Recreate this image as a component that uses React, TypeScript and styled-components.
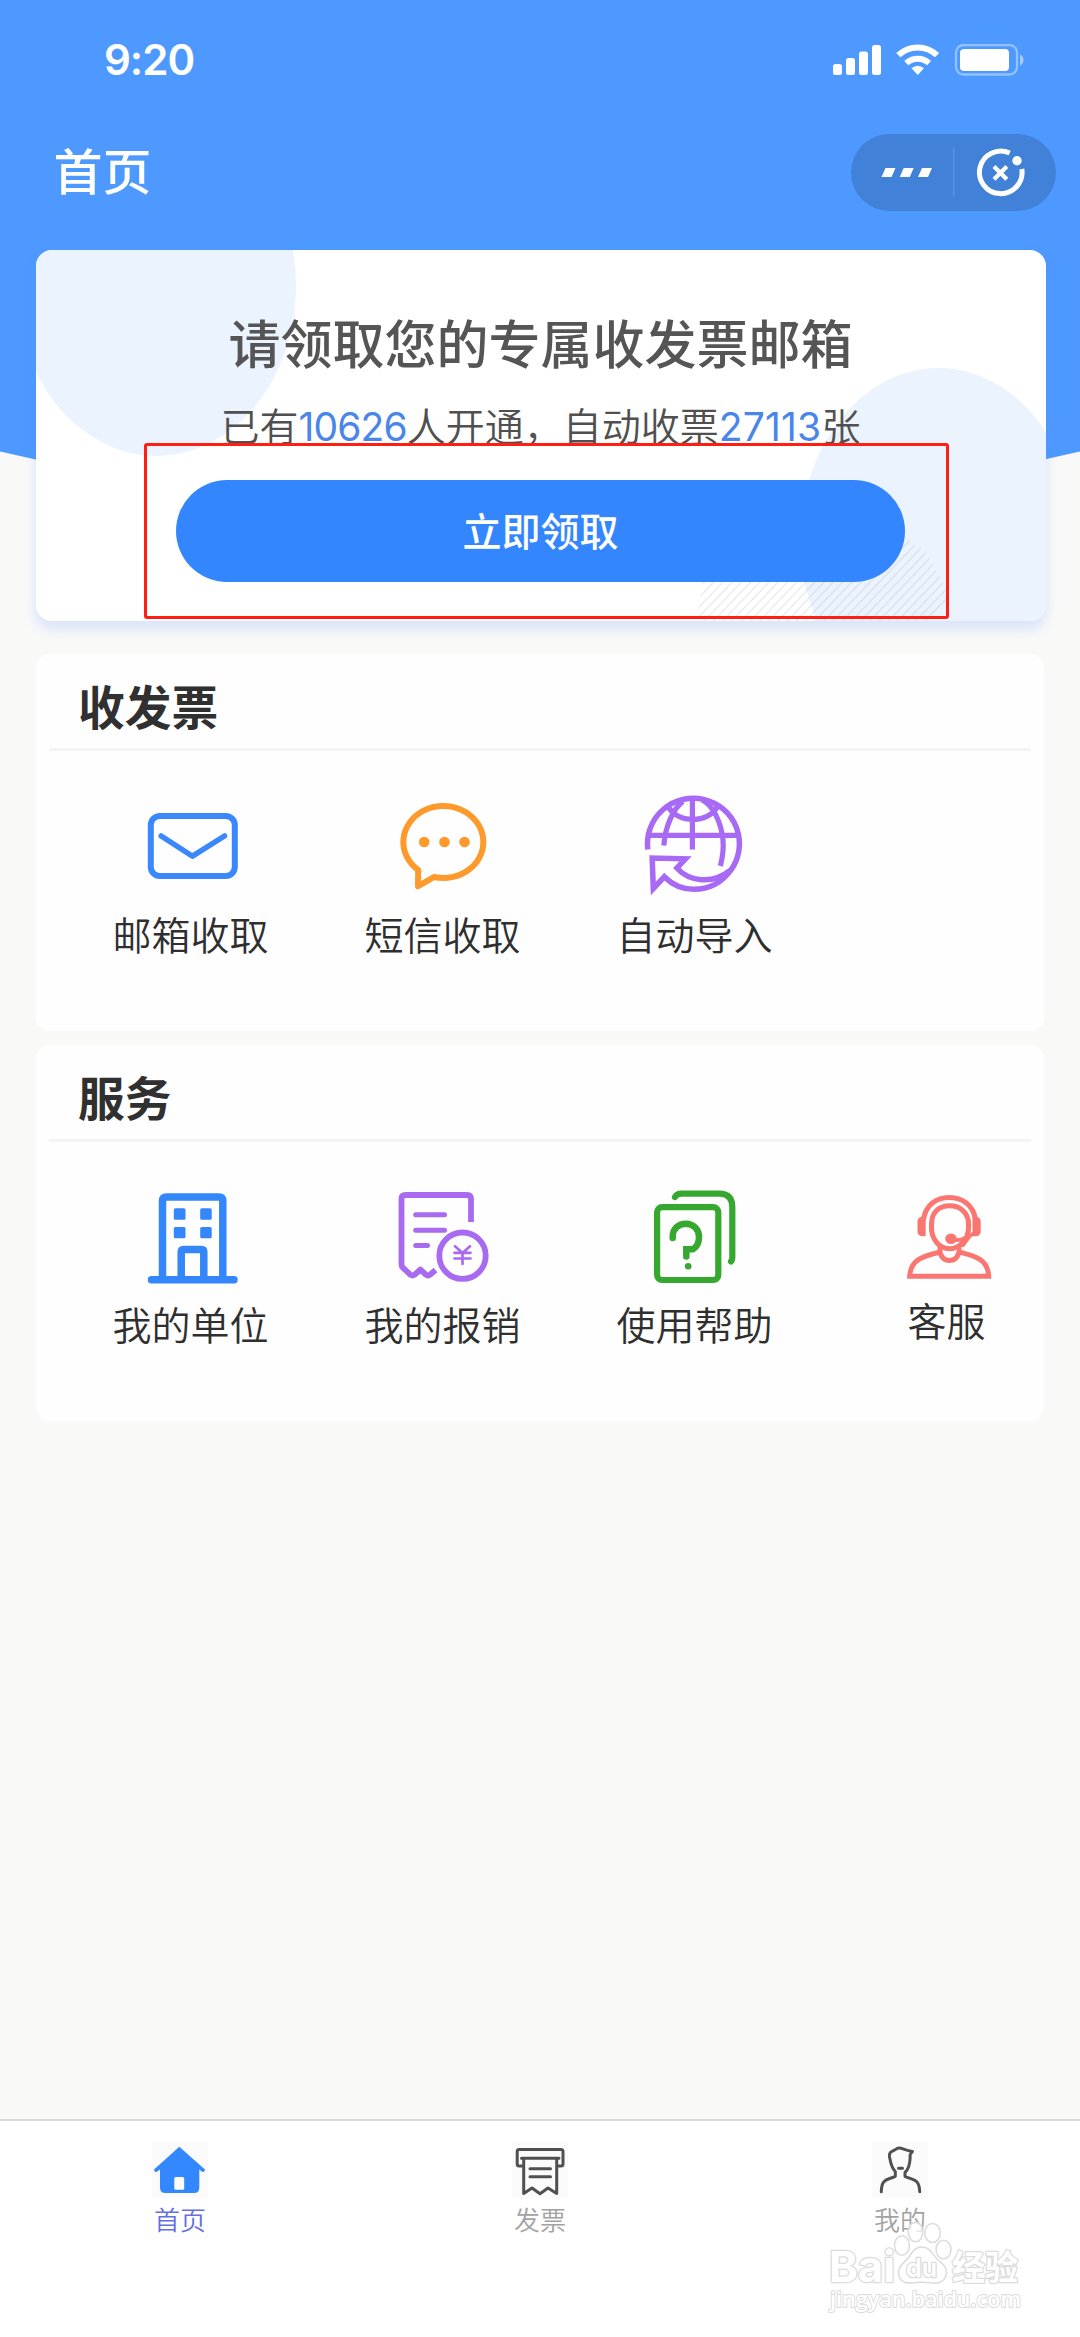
import React from 'react';
import styled, { createGlobalStyle } from 'styled-components';

const GlobalStyle = createGlobalStyle`
  *, *::before, *::after { box-sizing: border-box; }
  body {
    margin: 0;
    background: #f9f9f8;
    font-family: Inter, "Noto Sans CJK SC", sans-serif;
    color: #2f2f2f;
  }
`;

const Page = styled.div`
  position: relative;
  width: 1080px;
  height: 2337px;
  display: flex;
  flex-direction: column;
  overflow: hidden;
`;

const Hero = styled.header`
  flex: none;
  height: 520px;
  background: #4e99ff;
  clip-path: circle(2400px at 540px -1887px);
  color: #fff;
`;

const StatusBar = styled.div`
  height: 119px;
  padding: 0 56px 0 104px;
  display: flex;
  align-items: center;
  justify-content: space-between;
`;

const Clock = styled.span`
  font-size: 42px;
  font-weight: 600;
  line-height: 1;
  letter-spacing: -1px;
`;

const NavBar = styled.div`
  height: 107px;
  padding: 0 24px 0 53.5px;
  display: flex;
  align-items: center;
  justify-content: space-between;
`;

const NavTitle = styled.h1`
  margin: 0;
  font-size: 49px;
  line-height: 60px;
  font-weight: 500;
`;

const Capsule = styled.div`
  width: 205px;
  height: 77px;
  border-radius: 39px;
  background: #4281d8;
`;

const ClaimCard = styled.section`
  position: relative;
  flex: none;
  width: 1010px;
  height: 371px;
  margin: -270px 0 0 35.5px;
  padding-top: 66px;
  display: flex;
  flex-direction: column;
  align-items: center;
  border-radius: 16px;
  background: #fff;
  overflow: hidden;
  box-shadow: 0 8px 14px rgba(78, 140, 255, 0.2);
`;

const Decoration = styled.svg`
  position: absolute;
  inset: 0;
`;

const ClaimTitle = styled.h2`
  position: relative;
  margin: 0;
  font-size: 52px;
  line-height: 60px;
  font-weight: 500;
  color: #555;
`;

const ClaimStats = styled.p`
  position: relative;
  margin: 26px 0 0;
  display: flex;
  font-size: 39px;
  line-height: 50px;
  font-weight: 350;
  color: #505050;
  white-space: nowrap;
`;

const Count = styled.span<{ $spacing: number }>`
  font-size: 39px;
  font-weight: 400;
  letter-spacing: ${(p) => p.$spacing}px;
  color: #4a86ea;
`;

const ClaimButton = styled.button`
  position: relative;
  width: 729px;
  height: 102px;
  margin: 28px 0 0;
  padding: 0;
  border: 0;
  border-radius: 51px;
  background: #3486ff;
  color: #fff;
  font: 500 39px/103px Inter, "Noto Sans CJK SC", sans-serif;
`;

const Highlight = styled.div`
  position: absolute;
  left: 108px;
  top: 193px;
  width: 805px;
  height: 176px;
  border: 3px solid #ff1f12;
  border-radius: 3px;
`;

const Sections = styled.main`
  flex: 1;
  padding: 33px 36px 0;
  display: flex;
  flex-direction: column;
  gap: 14px;
`;

const Section = styled.section`
  height: 376.5px;
  border-radius: 14px;
  background: #fefefe;
`;

const SectionTitle = styled.h3`
  height: 97px;
  margin: 0 13px;
  padding: 12px 0 0 29px;
  border-bottom: 3px solid #f4f4f4;
  font-size: 46.7px;
  line-height: 84px;
  font-weight: 700;
  color: #303030;
`;

const Grid = styled.div`
  width: 1008px;
  margin-left: 28.5px;
  padding-top: 39px;
  display: grid;
  grid-template-columns: repeat(4, 252px);
`;

const Entry = styled.div<{ $lift?: number }>`
  display: flex;
  flex-direction: column;
  align-items: center;
  gap: ${(p) => 11.5 - (p.$lift ?? 0)}px;
  font-size: 39px;
  line-height: 52px;
  font-weight: 350;
`;

const TabBar = styled.nav`
  flex: none;
  height: 218px;
  padding-top: 21px;
  border-top: 2px solid #d9d9d9;
  background: #fff;
  display: grid;
  grid-template-columns: repeat(3, 1fr);
`;

const Tab = styled.div<{ $active?: boolean }>`
  display: flex;
  flex-direction: column;
  align-items: center;
  gap: 7.5px;
  font-size: 26px;
  line-height: 30px;
  font-weight: 350;
  color: ${(p) => (p.$active ? '#6470e0' : '#a3a3a3')};
  svg { background: #fbfbfb; }
`;

const Watermark = styled.div`
  position: absolute;
  left: 826px;
  top: 2218px;
`;

const Line = ({ color, width = 6, children }: { color: string; width?: number; children: React.ReactNode }) => (
  <svg width="100" height="108" viewBox="0 0 100 108" fill="none" stroke={color} strokeWidth={width} strokeLinecap="round" strokeLinejoin="round" overflow="visible">
    {children}
  </svg>
);

const MailIcon = () => (
  <Line color="#3a88fb">
    <rect x="9.8" y="26" width="84" height="60" rx="9" />
    <path d="M20.2 46 51.5 66.2 83.5 46" strokeWidth="5.5" />
  </Line>
);

const SmsIcon = () => (
  <Line color="#fd9a2b">
    <path d="M25.2 80A40 36 0 1 1 41 87L25 96.2Z" />
    <g fill="#fd9a2b" stroke="none">
      <circle cx="31.2" cy="52" r="5.3" />
      <circle cx="51.5" cy="52" r="5.3" />
      <circle cx="71.5" cy="52" r="5.3" />
    </g>
  </Line>
);

const GlobeIcon = () => (
  <Line color="#a86af5" width={5.5}>
    <g strokeLinecap="butt" strokeLinejoin="miter">
      <path d="M2.800 59.500A46 45.500 0 1 1 86 80C76 94 64 99.300 48.700 99.300C37 99.300 27 94.500 19.300 86.800L8.300 98.500 7.200 68 40.500 68.800 31.800 78C44 91.500 67 95 86 80" />
      <path d="M5 45.300H93M47.400 8V59.500M38 11.500C28 18 20 38 18.800 55.500M57 10C68 15 76 32 78 50C78.800 59 77.400 68 75.400 76M23.600 17.500C34 33.500 61 33.500 72 17.500" strokeWidth="5.200" />
    </g>
  </Line>
);

const BuildingIcon = () => (
  <Line color="#3486fb" width={7.5}>
    <path d="M21.5 98V20q0-4 4-4H77.8q4 0 4 4V98M40.2 98V71q0-2.5 2.5-2.5H60.3q2.5 0 2.5 2.5V98M10.5 98.7H93" />
    <g fill="#3486fb" stroke="none">
      <rect x="32.8" y="27.3" width="11.7" height="11.4" rx="1.5" />
      <rect x="59.2" y="27.3" width="11.5" height="11.4" rx="1.5" />
      <rect x="32.8" y="46" width="11.7" height="11.2" rx="1.5" />
      <rect x="59.2" y="46" width="11.5" height="11.2" rx="1.5" />
    </g>
  </Line>
);

const ExpenseIcon = () => (
  <Line color="#a86af0" width={5.8}>
    <path strokeLinecap="butt" d="M78 41V18q0-4-4-4H12.500q-4 0-4 4V83.500q0 2 1.500 3.300L17.500 93.800q2 1.500 4 0L27.500 88.500 33 93.800q2 1.500 4 0L42.500 89" />
    <path strokeWidth="5" d="M22.700 33.700H51.500M22.700 49.300H51.500M22.700 64.500H34.500" />
    <circle cx="69.500" cy="74.700" r="23.200" />
    <path strokeWidth="2.700" d="M62 65.300 69.500 72 77 65.300M69.500 72V83M61.500 71.800H77.500M61.500 77.500H77.500" />
  </Line>
);

const HelpIcon = () => (
  <Line color="#37a82f" width={6.2}>
    <rect x="12.100" y="26.200" width="61.200" height="72.800" rx="5" />
    <path d="M30 16Q32 12.700 36 12.700H75.500Q87.300 13.500 87.300 26V77Q87.300 79 86 80.500" />
    <path strokeWidth="6.500" strokeLinejoin="miter" d="M27.700 57V55.500C27.700 47.500 33.500 42.700 40.800 42.700C48.500 42.700 54 48.500 54 56C54 61.500 51.500 66 48 68.200H41.300V75.500" />
    <circle cx="43.200" cy="85.300" r="3.300" fill="#37a82f" stroke="none" />
  </Line>
);

const ServiceIcon = () => (
  <Line color="#fb7670" width={5}>
    <path d="M26.500 38C29 24 39 16.400 52.200 16.400S76 24 78.500 38" />
    <g fill="#fb7670" stroke="none">
      <path d="M28.700 35V55Q20.500 56 20.500 51V40Q20.500 35.500 28.700 35Z" />
      <path d="M75.500 35V55Q83.700 56 83.700 51V40Q83.700 35.500 75.500 35Z" />
      <ellipse cx="54" cy="57.700" rx="5.800" ry="5.300" />
    </g>
    <path d="M34.500 43C34.500 31.500 42 24.700 52.500 24.700S71.500 31.500 71.500 43V47C71.500 57 63.500 67.800 52.500 67.800S34.500 57 34.500 47Z" />
    <path strokeWidth="3.800" d="M55 58.500C63 60.500 72 56 78 51.500M72 56 66 64" />
    <path strokeLinejoin="miter" d="M43 66V71C27 75 13.500 78 12.700 95.300H91.700C91 78 78 75 62 71V66M43 71.500C45 78 48.500 79.500 52.500 79.500S60 78 62 71.500" />
  </Line>
);

const TabIcon = ({ children }: { children: React.ReactNode }) => (
  <svg width="56" height="56" viewBox="0 0 56 56" fill="none" stroke="#505050" strokeWidth="3" strokeLinecap="round" strokeLinejoin="round">
    {children}
  </svg>
);

const HomeTabIcon = () => (
  <TabIcon>
    <path d="M27.300 4.700 2 27.500Q2 30.500 5 29.800L8 27.500V45.500Q8 51 13.500 51H42Q47.300 51 47.300 45.500V27.500L50 29.800Q53 30.500 53 27.500Z" fill="#3388ff" stroke="none" />
    <rect x="22.300" y="35" width="9.900" height="12.800" rx="1.500" fill="#fff" stroke="none" />
  </TabIcon>
);

const InvoiceTabIcon = () => (
  <TabIcon>
    <path d="M11 24H7.200Q5.200 24 5.200 22V9.500Q5.200 7.500 7.200 7.500H49Q51 7.500 51 9.500V22Q51 24 49 24H45M9.500 16.300H47M11.700 16.500V51.500L20 46 28 51.800 36 46 44.700 51.500V16.500M18 26.700H38.500M18 34.700H38.500" />
  </TabIcon>
);

const MineTabIcon = () => (
  <TabIcon>
    <path d="M9.300 49.800C9.300 36 16 38 23.300 34.300V29.500C19 25.500 18.500 20 17.500 14.500C17 9.500 20 9.500 23.500 7.500C28 3.500 31 8.500 40.500 9.500C38.500 11.500 37.500 13 38.200 15C38 22 37 27 33 30.500V34.300C40 38 47.500 36 47.700 49.800M26.500 26.300H30.500" />
  </TabIcon>
);

const StatusIcons = () => (
  <svg width="191" height="32" viewBox="833 43 191 32" fill="#fff">
    <rect x="833" y="63" width="9" height="11" rx="2.500" />
    <rect x="846" y="57" width="9" height="17" rx="2.500" />
    <rect x="859" y="50.500" width="9" height="23.500" rx="2.500" />
    <rect x="872" y="44" width="9" height="30" rx="2.500" />
    <g fill="none" stroke="#fff" strokeWidth="6">
      <path d="M898.300 54.200A28 28 0 0 1 937.100 54.200" />
      <path d="M906.300 62.200A16.500 16.500 0 0 1 929.100 62.200" />
    </g>
    <path d="M911.500 67.300Q917.700 62 923.900 67.300L917.700 74Z" />
    <rect x="956" y="44" width="61" height="29.500" rx="7.500" fill="none" stroke="#fff" strokeOpacity=".4" strokeWidth="2.300" />
    <rect x="960" y="48" width="49" height="22" rx="4" />
    <path d="M1020 53.500Q1023.500 55 1023.500 59T1020 64.500Z" fillOpacity=".5" />
  </svg>
);

const CapsuleIcons = () => (
  <svg width="205" height="77" viewBox="851 134 205 77" fill="#fff">
    <path d="M885.500 168h10l-4 9h-10zM903.700 168h10l-4 9h-10zM922 168h10l-4 9h-10z" />
    <path d="M953.700 147V197" stroke="#5a92de" strokeWidth="1.500" />
    <g fill="none" stroke="#fff">
      <path d="M1009.700 153A21.300 21.300 0 1 0 1021.800 169" strokeWidth="5" />
      <path d="M994 166.500 1006.800 179.300M1006.800 166.500 994 179.300" strokeWidth="4.200" />
    </g>
    <circle cx="1017" cy="160.700" r="4.700" />
  </svg>
);

const hatch = Array.from({ length: 34 }, (_, i) => 560 + i * 9.2);

const CardDecoration = () => (
  <Decoration width="1010" height="371" viewBox="35.500 250 1010 371">
    <defs>
      <clipPath id="hatchArea">
        <path d="M696 622 702 583 760 540H908L925 552 942 582 957 622Z" />
      </clipPath>
    </defs>
    <ellipse cx="156" cy="286" rx="139.500" ry="170" fill="#ebf3fe" />
    <ellipse cx="938" cy="540" rx="138" ry="172" fill="#ebf3fe" />
    <g clipPath="url(#hatchArea)" stroke="#a4a9b4" strokeOpacity=".24" strokeWidth="1.300">
      {hatch.map((x) => (
        <path key={x} d={`M${x + 60} 622L${x + 142} 536`} />
      ))}
    </g>
  </Decoration>
);

const WatermarkArt = () => (
  <svg width="200" height="100" viewBox="826 2218 200 100" fill="#fff" stroke="#dcdcdc" strokeWidth="1.600" strokeLinejoin="round">
    <g fillOpacity=".75">
      <ellipse cx="902" cy="2245.500" rx="7.500" ry="9.800" />
      <ellipse cx="915.500" cy="2232" rx="7.300" ry="9.800" />
      <ellipse cx="932.500" cy="2233" rx="7.800" ry="9.500" />
      <ellipse cx="943.500" cy="2249.500" rx="7.500" ry="9.300" />
      <path d="M922 2247C929 2247 932 2253 936 2258C941 2263 947 2266 946.500 2273C946 2281 939 2284 932 2283C925 2282 919 2282 911 2283C903 2284 898.500 2279 898.500 2272C899 2265 905 2262 909 2257C912 2252 915 2247 922 2247Z" />
    </g>
    <g fontFamily="Inter, 'Noto Sans CJK SC', sans-serif" paintOrder="stroke" strokeWidth="2.600">
      <text x="829" y="2281.500" fontSize="43" fontWeight="700" textLength="66" lengthAdjust="spacingAndGlyphs">Bai</text>
      <text x="906" y="2277" fontSize="25" fontWeight="600" textLength="31" lengthAdjust="spacingAndGlyphs">du</text>
      <text x="952" y="2279.500" fontSize="34" fontWeight="700" textLength="66" lengthAdjust="spacingAndGlyphs">经验</text>
      <text x="830" y="2307" fontSize="22" fontFamily="'Open Sans', sans-serif" fontWeight="600" textLength="191" lengthAdjust="spacingAndGlyphs" strokeWidth="2">jingyan.baidu.com</text>
    </g>
  </svg>
);

const invoiceEntries = [
  { label: '邮箱收取', Icon: MailIcon },
  { label: '短信收取', Icon: SmsIcon },
  { label: '自动导入', Icon: GlobeIcon },
];

const serviceEntries = [
  { label: '我的单位', Icon: BuildingIcon },
  { label: '我的报销', Icon: ExpenseIcon },
  { label: '使用帮助', Icon: HelpIcon },
  { label: '客服', Icon: ServiceIcon, lift: 4 },
];

type EntryData = { label: string; Icon: React.ComponentType; lift?: number };

const EntrySection = ({ title, entries }: { title: string; entries: EntryData[] }) => (
  <Section>
    <SectionTitle>{title}</SectionTitle>
    <Grid>
      {entries.map(({ label, Icon, lift }) => (
        <Entry key={label} $lift={lift}>
          <Icon />
          <span>{label}</span>
        </Entry>
      ))}
    </Grid>
  </Section>
);

export default function App() {
  return (
    <Page>
      <GlobalStyle />
      <Hero>
        <StatusBar>
          <Clock>9:20</Clock>
          <StatusIcons />
        </StatusBar>
        <NavBar>
          <NavTitle>首页</NavTitle>
          <Capsule>
            <CapsuleIcons />
          </Capsule>
        </NavBar>
      </Hero>
      <ClaimCard>
        <CardDecoration />
        <ClaimTitle>请领取您的专属收发票邮箱</ClaimTitle>
        <ClaimStats>
          <span>已有</span>
          <Count $spacing={-0.9}>10626</Count>
          <span>人开通，自动收票</span>
          <Count $spacing={0.2}>27113</Count>
          <span>张</span>
        </ClaimStats>
        <ClaimButton>立即领取</ClaimButton>
        <Highlight />
      </ClaimCard>
      <Sections>
        <EntrySection title="收发票" entries={invoiceEntries} />
        <EntrySection title="服务" entries={serviceEntries} />
      </Sections>
      <TabBar>
        <Tab $active>
          <HomeTabIcon />
          <span>首页</span>
        </Tab>
        <Tab>
          <InvoiceTabIcon />
          <span>发票</span>
        </Tab>
        <Tab>
          <MineTabIcon />
          <span>我的</span>
        </Tab>
      </TabBar>
      <Watermark>
        <WatermarkArt />
      </Watermark>
    </Page>
  );
}
